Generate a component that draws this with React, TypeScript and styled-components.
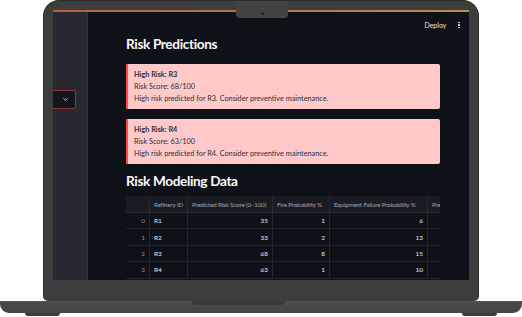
import { FC } from 'react';
import styled, { createGlobalStyle } from 'styled-components';
import { ChevronDown } from 'lucide-react';

const GlobalStyle = createGlobalStyle`
  * { box-sizing: border-box; }
  body {
    margin: 0;
    background: #ffffff;
    font-family: Lato, 'Liberation Sans', sans-serif;
  }
`;

const Device = styled.div`
  width: 522px;
  height: 317px;
  display: flex;
  flex-direction: column;
`;

const Lid = styled.div`
  position: relative;
  margin-left: 43px;
  width: 436px;
  height: 301px;
  padding: 9px 9px 21px;
  background: #3d3d3d;
  border: 1px solid #2c2c2c;
  border-bottom: none;
  border-radius: 16px 16px 5px 5px;
  display: flex;
`;

const Notch = styled.div`
  position: absolute;
  top: 0;
  left: 192px;
  width: 52px;
  height: 17px;
  background: #434343;
  border-radius: 0 0 4px 4px;
  display: flex;
  align-items: flex-end;
  justify-content: center;
  padding-bottom: 3px;
  z-index: 2;
`;

const Camera = styled.div`
  width: 3px;
  height: 3px;
  border-radius: 50%;
  background: #222;
`;

const Screen = styled.div`
  position: relative;
  flex: 1;
  display: flex;
  flex-direction: column;
  background: #0e1117;
  overflow: hidden;
`;

const Decoration = styled.div`
  height: 2px;
  background: linear-gradient(90deg, #b9603d, #a8814a 60%, #b3934f);
`;

const Body = styled.div`
  flex: 1;
  display: flex;
  min-height: 0;
`;

const Sidebar = styled.div`
  width: 35px;
  background: #272830;
  border-right: 1px solid #30313a;
  padding-top: 78px;
`;

const SelectBox = styled.div`
  width: 23px;
  height: 19px;
  background: #13151c;
  border: 1px solid #8c3b3b;
  border-left: none;
  border-radius: 0 3px 3px 0;
  display: flex;
  align-items: center;
  justify-content: flex-end;
  padding-right: 6px;
  color: #e6e6e6;
`;

const Main = styled.div`
  position: relative;
  flex: 1;
  padding: 22px 29px 0 38px;
  overflow: hidden;
`;

const Toolbar = styled.div`
  position: absolute;
  top: 9px;
  right: 5px;
  display: flex;
  align-items: center;
  gap: 8px;
  font-size: 7px;
  color: #e2e2e2;
`;

const Kebab = styled.div`
  display: flex;
  flex-direction: column;
  gap: 1px;
  padding: 0 4px;

  span {
    width: 1.6px;
    height: 1.6px;
    border-radius: 50%;
    background: #f0f0f0;
  }
`;

const Heading = styled.h3<{ $top?: number }>`
  margin: ${(p) => p.$top ?? 0}px 0 0;
  height: 20px;
  line-height: 20px;
  font-size: 13.6px;
  font-weight: 700;
  color: #fafafa;
  letter-spacing: -0.35px;
`;

const Alert = styled.div`
  margin-top: 10px;
  height: 45px;
  padding: 5px 6px 0;
  background: #ffc9c9;
  border-left: 2px solid #ff4b4b;
  border-radius: 0 2px 2px 0;
  font-size: 7.3px;
  line-height: 12px;
  color: #2e2f38;
`;

const AlertTitle = styled.div`
  font-weight: 700;
`;

const TableWrap = styled.div`
  margin-top: 5px;
  width: 314px;
  overflow: hidden;
  border-radius: 4px 4px 0 0;
  background: #0e1117;
`;

const COLS = '24px 38px 85px 57px 98px 60px';

const HeaderRow = styled.div`
  display: grid;
  grid-template-columns: ${COLS};
  height: 17px;
  background: #1a1c23;
  border-bottom: 1px solid #2a2c34;
`;

const Row = styled.div`
  display: grid;
  grid-template-columns: ${COLS};
  height: 16.4px;
  border-bottom: 1px solid #22242c;
`;

const Cell = styled.div<{ $align?: 'left' | 'right'; $muted?: boolean; $head?: boolean }>`
  display: flex;
  align-items: center;
  justify-content: ${(p) => (p.$align === 'right' ? 'flex-end' : 'flex-start')};
  padding: 0 4px;
  border-right: 1px solid #262830;
  font-size: ${(p) => (p.$head ? '6.1px' : '6.4px')};
  letter-spacing: ${(p) => (p.$head ? '-0.1px' : '0')};
  color: ${(p) => (p.$head ? '#a3a6b0' : p.$muted ? '#8d909a' : '#e8e8ea')};
  white-space: nowrap;
  overflow: hidden;
`;

const Base = styled.div`
  position: relative;
  height: 12px;
  background: linear-gradient(#555 0, #4a4a4a 2px, #444 100%);
  border-radius: 0 0 9px 9px;
  display: flex;
  justify-content: center;
`;

const Groove = styled.div`
  margin-left: -46px;
  width: 93px;
  height: 4px;
  background: #3a3a3a;
  border-radius: 0 0 4px 4px;
`;

const Feet = styled.div`
  display: flex;
  justify-content: space-between;
  padding: 0 25px;
`;

const Foot = styled.div`
  width: 35px;
  height: 3px;
  background: #3a3a3a;
  border-radius: 0 0 3px 3px;
`;

interface Prediction {
  id: string;
  score: number;
}

interface ModelRow {
  id: string;
  score: number;
  fire: number;
  failure: number;
}

const predictions: Prediction[] = [
  { id: 'R3', score: 68 },
  { id: 'R4', score: 63 },
];

const rows: ModelRow[] = [
  { id: 'R1', score: 35, fire: 1, failure: 6 },
  { id: 'R2', score: 33, fire: 2, failure: 13 },
  { id: 'R3', score: 68, fire: 8, failure: 15 },
  { id: 'R4', score: 63, fire: 1, failure: 10 },
];

const App: FC = () => (
  <Device>
    <GlobalStyle />
    <Lid>
      <Notch>
        <Camera />
      </Notch>
      <Screen>
        <Decoration />
        <Body>
          <Sidebar>
            <SelectBox>
              <ChevronDown size={7} strokeWidth={3} />
            </SelectBox>
          </Sidebar>
          <Main>
            <Toolbar>
              <span>Deploy</span>
              <Kebab>
                <span />
                <span />
                <span />
              </Kebab>
            </Toolbar>
            <Heading>Risk Predictions</Heading>
            {predictions.map((p) => (
              <Alert key={p.id}>
                <AlertTitle>High Risk: {p.id}</AlertTitle>
                <div>Risk Score: {p.score}/100</div>
                <div>High risk predicted for {p.id}. Consider preventive maintenance.</div>
              </Alert>
            ))}
            <Heading $top={7}>Risk Modeling Data</Heading>
            <TableWrap>
              <HeaderRow>
                <Cell $head />
                <Cell $head>Refinery ID</Cell>
                <Cell $head>Predicted Risk Score (0–100)</Cell>
                <Cell $head>Fire Probability %</Cell>
                <Cell $head>Equipment Failure Probability %</Cell>
                <Cell $head>Pre</Cell>
              </HeaderRow>
              {rows.map((r, i) => (
                <Row key={r.id}>
                  <Cell $align="right" $muted>{i}</Cell>
                  <Cell>{r.id}</Cell>
                  <Cell $align="right">{r.score}</Cell>
                  <Cell $align="right">{r.fire}</Cell>
                  <Cell $align="right">{r.failure}</Cell>
                  <Cell />
                </Row>
              ))}
            </TableWrap>
          </Main>
        </Body>
      </Screen>
    </Lid>
    <Base>
      <Groove />
    </Base>
    <Feet>
      <Foot />
      <Foot />
    </Feet>
  </Device>
);

export default App;
